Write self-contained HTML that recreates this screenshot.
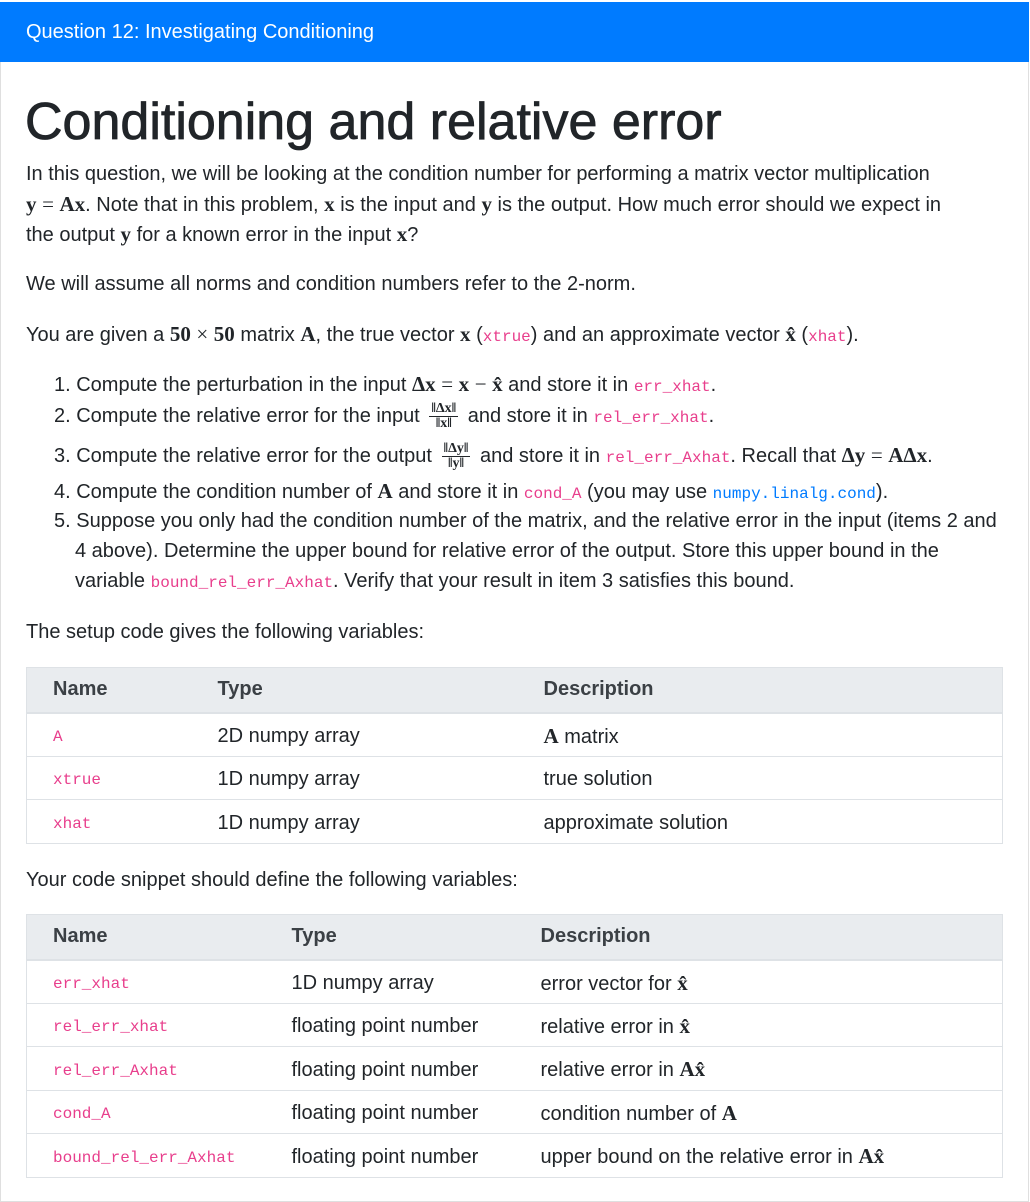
<!DOCTYPE html>
<html><head><meta charset="utf-8">
<style>
*{box-sizing:border-box;margin:0;padding:0}
body{width:1030px;height:1183px;background:#fff;font-family:"Liberation Sans",sans-serif;color:#212529;font-size:20px;overflow:hidden;position:relative}
.card{position:absolute;left:0;top:2px;width:1029px;height:1200px;border:1px solid #dfdfdf;border-top:none}
.hdr{position:absolute;left:0;top:2px;width:1029px;height:60px;background:#007bff;color:#fff;font-size:20px;line-height:60px;padding-left:26px}
.a{position:absolute;left:26px;white-space:nowrap;line-height:30px}
h1{position:absolute;left:25px;top:90px;font-size:52px;font-weight:normal;-webkit-text-stroke:0.8px #212529;line-height:64px}
code{font-family:"Liberation Mono",monospace;font-size:16px;color:#e83e8c}
code.b{color:#007bff}
.m{font-family:"Liberation Serif",serif;font-size:21px}
.mb{font-family:"Liberation Serif",serif;font-size:21px;font-weight:bold}
.fr{display:inline-block;vertical-align:middle;text-align:center;font-family:"Liberation Serif",serif;font-size:14px;line-height:14px;margin:0 4px}
.fr span{display:block}
.fr .t{border-bottom:1px solid #212529;padding:0 2px}
table{position:absolute;left:26px;width:977px;border-collapse:collapse;border:1px solid #dee2e6;font-size:20px;table-layout:fixed}
th{background:#e9ecef;text-align:left;font-weight:bold;color:#3b4045;height:45px;border-bottom:2px solid #dee2e6;padding-left:26px}
td{height:43.5px;border-top:1px solid #dee2e6;padding-left:26px;white-space:nowrap;line-height:24px;padding-top:3px}
</style></head><body>
<div class="card"></div>
<div class="hdr">Question 12: Investigating Conditioning</div>
<h1>Conditioning and relative error</h1>
<div class="a" style="top:159px">In this question, we will be looking at the condition number for performing a matrix vector multiplication</div>
<div class="a" style="top:189px"><span class="mb">y</span> <span class="m">=</span> <span class="mb">Ax</span>. Note that in this problem, <span class="mb">x</span> is the input and <span class="mb">y</span> is the output. How much error should we expect in</div>
<div class="a" style="top:219px">the output <span class="mb">y</span> for a known error in the input <span class="mb">x</span>?</div>
<div class="a" style="top:269px">We will assume all norms and condition numbers refer to the 2-norm.</div>
<div class="a" style="top:319px">You are given a <span class="mb">50</span> <span class="m">×</span> <span class="mb">50</span> matrix <span class="mb">A</span>, the true vector <span class="mb">x</span> (<code>xtrue</code>) and an approximate vector <span class="mb">x̂</span> (<code>xhat</code>).</div>
<div class="a" style="top:369px;left:54px">1. Compute the perturbation in the input <span class="mb">Δx</span> <span class="m">=</span> <span class="mb">x</span> <span class="m">−</span> <span class="mb">x̂</span> and store it in <code>err_xhat</code>.</div>
<div class="a" style="top:401px;left:54px">2. Compute the relative error for the input <span class="fr"><span class="t"><b>‖Δx‖</b></span><span><b>‖x‖</b></span></span> and store it in <code>rel_err_xhat</code>.</div>
<div class="a" style="top:440px;left:54px">3. Compute the relative error for the output <span class="fr"><span class="t"><b>‖Δy‖</b></span><span><b>‖y‖</b></span></span> and store it in <code>rel_err_Axhat</code>. Recall that <span class="mb">Δy</span> <span class="m">=</span> <span class="mb">AΔx</span>.</div>
<div class="a" style="top:476px;left:54px">4. Compute the condition number of <span class="mb">A</span> and store it in <code>cond_A</code> (you may use <code class="b">numpy.linalg.cond</code>).</div>
<div class="a" style="top:506px;left:54px">5. Suppose you only had the condition number of the matrix, and the relative error in the input (items 2 and</div>
<div class="a" style="top:536px;left:75px">4 above). Determine the upper bound for relative error of the output. Store this upper bound in the</div>
<div class="a" style="top:566px;left:75px">variable <code>bound_rel_err_Axhat</code>. Verify that your result in item 3 satisfies this bound.</div>
<div class="a" style="top:617px">The setup code gives the following variables:</div>
<table style="top:667px">
<tr><th style="width:165px">Name</th><th style="width:326px">Type</th><th>Description</th></tr>
<tr><td><code>A</code></td><td>2D numpy array</td><td><span class="mb">A</span> matrix</td></tr>
<tr><td><code>xtrue</code></td><td>1D numpy array</td><td>true solution</td></tr>
<tr><td><code>xhat</code></td><td>1D numpy array</td><td>approximate solution</td></tr>
</table>
<div class="a" style="top:865px">Your code snippet should define the following variables:</div>
<table style="top:914px">
<tr><th style="width:239px">Name</th><th style="width:249px">Type</th><th>Description</th></tr>
<tr><td><code>err_xhat</code></td><td>1D numpy array</td><td>error vector for <span class="mb">x̂</span></td></tr>
<tr><td><code>rel_err_xhat</code></td><td>floating point number</td><td>relative error in <span class="mb">x̂</span></td></tr>
<tr><td><code>rel_err_Axhat</code></td><td>floating point number</td><td>relative error in <span class="mb">Ax̂</span></td></tr>
<tr><td><code>cond_A</code></td><td>floating point number</td><td>condition number of <span class="mb">A</span></td></tr>
<tr><td><code>bound_rel_err_Axhat</code></td><td>floating point number</td><td>upper bound on the relative error in <span class="mb">Ax̂</span></td></tr>
</table>
</body></html>
